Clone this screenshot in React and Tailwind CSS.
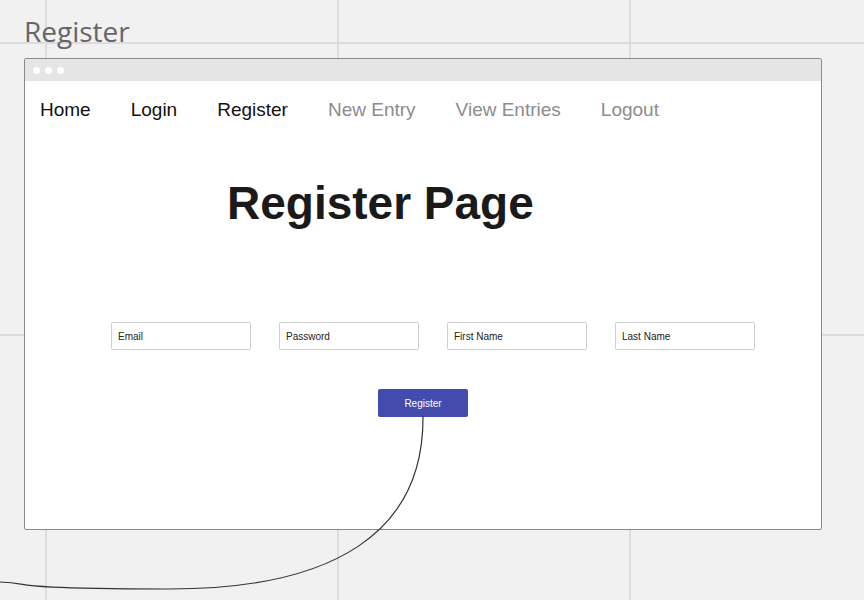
const NAV = [
  { label: 'Home', active: true },
  { label: 'Login', active: true },
  { label: 'Register', active: true },
  { label: 'New Entry', active: false },
  { label: 'View Entries', active: false },
  { label: 'Logout', active: false },
]

const FIELDS = ['Email', 'Password', 'First Name', 'Last Name']

function CanvasGrid() {
  return (
    <svg className="absolute inset-0 pointer-events-none" width="864" height="600">
      {[46, 338, 630].map((x) => (
        <line key={x} x1={x} y1="0" x2={x} y2="600" stroke="#dcdcdc" strokeWidth="2" />
      ))}
      {[43, 335].map((y) => (
        <line key={y} x1="0" y1={y} x2="864" y2={y} stroke="#dcdcdc" strokeWidth="2" />
      ))}
    </svg>
  )
}

function Connector() {
  return (
    <svg className="absolute inset-0 pointer-events-none" width="864" height="600">
      <path
        d="M423 416 C424 532 335 590 165 589 S 40 584 0 582"
        fill="none"
        stroke="#333"
        strokeWidth="1.2"
      />
    </svg>
  )
}

export default function App() {
  return (
    <div className="relative w-[864px] h-[600px] overflow-hidden bg-[#f1f1f1] font-['Liberation_Sans',Arial,sans-serif]">
      <CanvasGrid />

      <div className="relative pl-[24px] pt-[12px]">
        <div className="text-[28px] leading-[38px] text-[#666] font-['Open_Sans',sans-serif]">Register</div>

        {/* browser frame */}
        <div className="mt-[8px] w-[798px] h-[472px] bg-white border border-[#8a8a8a] rounded-[2px] overflow-hidden">
          <div className="h-[22px] bg-[#e5e5e5] flex items-center gap-[5px] pl-[8px]">
            <span className="w-[7px] h-[7px] rounded-full bg-white" />
            <span className="w-[7px] h-[7px] rounded-full bg-white" />
            <span className="w-[7px] h-[7px] rounded-full bg-white" />
          </div>

          <nav className="mt-[18px] pl-[15px] flex gap-[40px] text-[19px] leading-[22px]">
            {NAV.map((item) => (
              <span key={item.label} className={item.active ? 'text-[#111]' : 'text-[#8c8c8c]'}>
                {item.label}
              </span>
            ))}
          </nav>

          <h1 className="mt-[59px] pl-[202px] text-[46px] leading-[46px] font-bold text-[#1a1a1a]">Register Page</h1>

          <div className="mt-[96px] pl-[86px] flex gap-[28px]">
            {FIELDS.map((f) => (
              <div
                key={f}
                className="w-[140px] h-[28px] border border-[#cfcfcf] rounded-[2px] flex items-center pl-[6px] text-[10px] text-[#222]"
              >
                {f}
              </div>
            ))}
          </div>

          <div className="mt-[39px] pl-[353px]">
            <button className="w-[90px] h-[28px] rounded-[2px] bg-[#434bae] text-white text-[10px]">Register</button>
          </div>
        </div>
      </div>

      <Connector />
    </div>
  )
}
